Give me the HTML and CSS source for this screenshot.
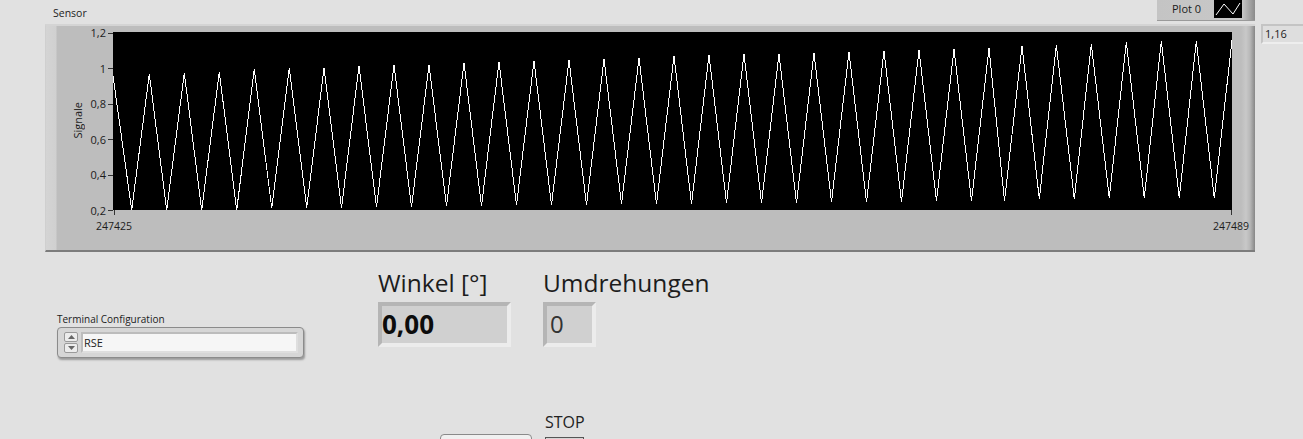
FILE: index.html
```html
<!DOCTYPE html>
<html lang="de">
<head>
<meta charset="utf-8">
<title>Sensor</title>
<link rel="stylesheet" href="styles.css">
</head>
<body>
<main class="front">
  <div class="graph-head"><span class="caption">Sensor</span></div>
  <div class="legend"><span class="legend-name">Plot 0</span>
    <svg class="legend-swatch" width="28" height="18" viewBox="0 0 28 18"><polyline points="2,15 10,4 19,14 26,3" fill="none" stroke="#fff" stroke-width="1"/></svg>
  </div>
  <div class="graph-row">
    <section class="graph">
      <div class="y-title-col"><span class="y-title">Signale</span></div>
      <div class="y-scale">
        <div class="y-tick"><span>1,2</span><i></i></div>
        <div class="y-tick"><span>1</span><i></i></div>
        <div class="y-tick"><span>0,8</span><i></i></div>
        <div class="y-tick"><span>0,6</span><i></i></div>
        <div class="y-tick"><span>0,4</span><i></i></div>
        <div class="y-tick"><span>0,2</span><i></i></div>
      </div>
      <div class="plot-col">
        <svg class="plot" id="plot" width="1119" height="178" viewBox="113 32 1119 178" shape-rendering="crispEdges"><polyline id="trace" fill="none" stroke="#fff" stroke-width="1" points="113,76 131.7,210 149.3,74 166.7,210 184.3,73 201.7,210 219.3,72 236.7,210 254.3,69 271.7,208 289.3,68 306.7,208 324,68 341.5,208 359,66 376.5,207 394,65 411.5,207 429,65 446.5,206 464,63 481.5,206 499,62 516.5,205 534,61 551.5,205 569,60 586.5,205 604,59 621.5,204 639,58 656.5,204 674,56 691.5,204 709,55 726.5,203 744,54 761.5,203 779,54 796.5,203 814,53 831.5,202 849,52 866.5,202 884,51 901.5,202 919,50 936.5,201 954,49 971.5,201 989,48 1004.5,201 1022,46 1039.3,199 1056.3,45 1074.3,199 1091.3,44 1109.3,198 1126.3,42 1144.3,198 1161.3,41 1179.3,198 1196.3,41 1214.3,198 1232,40"/></svg>
        <div class="x-scale"><span class="x-first">247425</span><span class="x-last">247489</span></div>
      </div>
    </section>
    <div class="cursor-value">1,16</div>
  </div>
  <div class="controls">
    <div class="ring-block">
      <label class="caption ring-label">Terminal Configuration</label>
      <div class="ring">
        <div class="spinner">
          <span class="spin"><svg width="11" height="8" viewBox="0 0 11 8"><path d="M2 6 5.5 2 9 6Z" fill="#666"/></svg></span>
          <span class="spin"><svg width="11" height="8" viewBox="0 0 11 8"><path d="M2 2 5.5 6 9 2Z" fill="#666"/></svg></span>
        </div>
        <div class="ring-text">RSE</div>
      </div>
    </div>
    <div class="indicator ind-angle">
      <div class="big-label">Winkel [°]</div>
      <div class="num num-angle">0,00</div>
    </div>
    <div class="indicator ind-turns">
      <div class="big-label">Umdrehungen</div>
      <div class="num num-turns">0</div>
    </div>
  </div>
  <div class="bottom">
    <div class="white-btn"></div>
    <div class="stop-block">
      <div class="stop-label">STOP</div>
      <div class="stop-btn"></div>
    </div>
  </div>
</main>
</body>
</html>
```
FILE: styles.css
```css
* { box-sizing: border-box; }
html, body { margin: 0; height: 100%; overflow: hidden; }
body {
  background: #e1e1e1;
  color: #1a1a1a;
  font-family: "Open Sans", "Liberation Sans", sans-serif;
}
.front { position: relative; width: 1303px; height: 439px; overflow: hidden; }
.caption { font-size: 10.5px; line-height: 14px; color: #222; }
.graph-head { height: 24px; padding: 6px 0 0 53px; }
.graph-head .caption { display: block; }

.legend {
  position: absolute; left: 1157px; top: 0; width: 98px; height: 21px;
  display: flex; align-items: flex-start; padding-left: 15px; gap: 13px;
  background: linear-gradient(90deg, #c4c4c4 0, #c8c8c8 85px, #8a8a8a 98px);
  border-bottom: 1px solid #9a9a9a;
  font-size: 11px; line-height: 18px;
}
.legend-name { white-space: nowrap; }
.legend-swatch { background: #000; display: block; width: 28px; height: 18px; }

.graph-row { display: flex; align-items: flex-start; }
.graph {
  margin-left: 45px; width: 1210px; height: 228px;
  display: flex; padding-top: 6px;
  background: linear-gradient(90deg, #d4d4d4 0, #d0d0d0 10px, #bdbdbd 11px, #bdbdbd 1195px, #c8c8c8 1200px, #b8b8b8 1204px, #7d7d7d 1210px);
  border-top: 2px solid #d4d4d4;
  border-bottom: 2px solid #7c7c7c;
  border-left: 1px solid #cfcfcf;
}
.y-title-col { width: 25px; height: 178px; display: flex; align-items: center; justify-content: flex-end; }
.y-title {
  writing-mode: vertical-rl; transform: rotate(180deg);
  font-size: 11px; line-height: 12px; margin-top: -2px; margin-right: -13px;
}
.y-scale {
  width: 42px; height: 192px; margin-top: -6px;
  display: flex; flex-direction: column; justify-content: space-between;
}
.y-tick { height: 14px; display: flex; align-items: center; justify-content: flex-end; gap: 2px; font-size: 11px; line-height: 14px; color: #1c1c1c; }
.y-tick i { width: 5px; height: 1px; background: #333; }
.plot-col { width: 1119px; }
.plot { display: block; background: #000; }
.x-scale { position: relative; display: flex; justify-content: space-between; height: 18px; font-size: 10.5px; line-height: 14px; color: #1c1c1c; }
.x-first { margin-left: -17px; padding-top: 9px; }
.x-last { margin-right: -17px; padding-top: 9px; }
.x-first::before, .x-last::before {
  content: ""; position: absolute; top: 0; width: 1px; height: 5px; background: #333;
}
.x-first::before { left: 1px; }
.x-last::before { right: 0; }

.cursor-value {
  margin-left: 6px; flex: 1; height: 20px;
  background: #dedede;
  border-left: 2px solid #c4c4c4; border-top: 2px solid #c4c4c4; border-bottom: 2px solid #eeeeee;
  font-size: 11px; line-height: 16px; padding-left: 2px; color: #222;
}

.controls { display: flex; align-items: flex-start; height: 162px; }
.ring-block { margin: 60px 0 0 57px; width: 247px; }
.ring-label { display: block; font-size: 10px; line-height: 15px; white-space: nowrap; }
.ring {
  height: 31px; display: flex; gap: 3px; padding: 4px 5px 0 6px;
  background: #d6d6d6;
  border: 1px solid #8b8b8b; border-radius: 4px;
  box-shadow: 1px 2px 2px #9a9a9a;
}
.spinner { width: 14px; height: 20px; display: flex; flex-direction: column; gap: 1px; }
.spin { flex: 1; display: flex; align-items: center; justify-content: center; background: #ececec; border: 1px solid #9a9a9a; border-radius: 2px; }
.ring-text {
  flex: 1; height: 21px; background: #f6f6f6;
  border: 2px solid #bcbcbc; border-right-color: #dedede; border-bottom-color: #dedede;
  font-size: 11px; line-height: 17px; padding-left: 1px; color: #222;
}
.indicator { display: flex; flex-direction: column; margin-top: 15px; }
.ind-angle { margin-left: 74px; width: 133px; }
.ind-turns { margin-left: 32px; }
.big-label { font-size: 24.5px; line-height: 31px; height: 35px; color: #1c1c1c; white-space: nowrap; }
.num {
  height: 45px; background: #d0d0d0;
  border: 4px solid; border-color: #b5b5b5 #ececec #ececec #b5b5b5;
  line-height: 36px;
}
.num-angle { width: 133px; font-size: 26px; font-weight: 700; color: #0c0c0c; padding-left: 0; }
.num-turns { width: 53px; font-size: 24px; color: #333; padding-left: 3px; }

.bottom { display: flex; align-items: flex-start; margin-left: 440px; gap: 13px; position: absolute; top: 413px; left: 0; }
.white-btn { margin-top: 21px; width: 92px; height: 20px; background: #f0f0f0; border: 1px solid #8a8a8a; border-radius: 4px 4px 0 0; }
.stop-label { font-size: 16px; line-height: 18px; height: 24px; color: #222; }
.stop-btn { width: 39px; height: 10px; border: 1px solid #555; border-bottom: 0; background: #d4d4d4; }
```
